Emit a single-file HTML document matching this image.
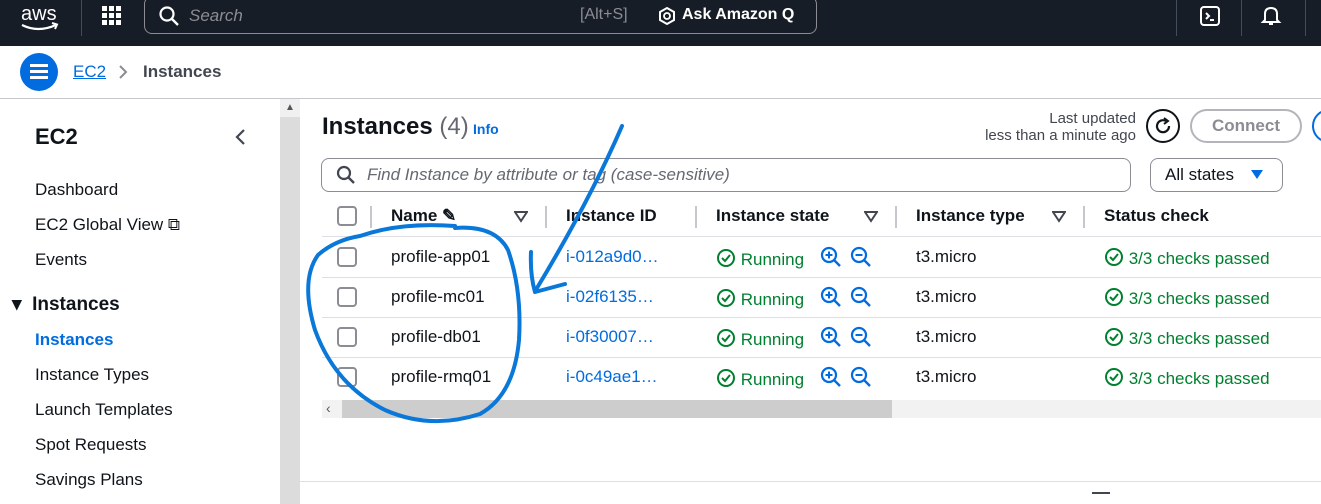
<!DOCTYPE html>
<html><head><meta charset="utf-8"><style>
*{box-sizing:border-box;margin:0;padding:0}
body{width:1321px;height:504px;overflow:hidden;background:#fff;font-family:"Liberation Sans",sans-serif;color:#0f141a;position:relative}
.abs{position:absolute}
.top{left:0;top:0;width:1321px;height:46px;background:#161d26}
.side a,.side div{position:absolute;left:35px;font-size:17px;color:#0f141a;white-space:nowrap}
.hdr{position:absolute;top:206px;font-size:17px;font-weight:bold;color:#0f141a}
.cb{position:absolute;left:337px;width:20px;height:20px;border:2px solid #8c8c94;border-radius:4px;background:#fff}
.row{position:absolute;left:322px;width:1000px;height:1px;background:#dedee3}
.t{position:absolute;font-size:17px;white-space:nowrap}
.g{color:#00802f}
.b{color:#006ce0}
</style></head><body>
<div class="abs top"></div>
<svg class="abs" style="left:18px;top:2px" width="46" height="34" viewBox="0 0 46 34"><text x="3" y="18" fill="#fff" font-size="20" font-family="Liberation Sans">aws</text><path d="M4 23 Q20 31 38 23" stroke="#fff" stroke-width="2.2" fill="none"/><path d="M34 21 L39 22.5 L37 27" stroke="#fff" stroke-width="2" fill="none"/></svg>
<div class="abs" style="left:81px;top:0;width:1px;height:36px;background:#414d5c"></div>
<svg class="abs" style="left:101px;top:5px" width="22" height="22"><g fill="#fff"><rect x="1" y="1" width="5" height="5"/><rect x="8" y="1" width="5" height="5"/><rect x="15" y="1" width="5" height="5"/><rect x="1" y="8" width="5" height="5"/><rect x="8" y="8" width="5" height="5"/><rect x="15" y="8" width="5" height="5"/><rect x="1" y="15" width="5" height="5"/><rect x="8" y="15" width="5" height="5"/><rect x="15" y="15" width="5" height="5"/></g></svg>
<div class="abs" style="left:144px;top:-4px;width:673px;height:38px;border:1.5px solid #8c8c94;border-radius:8px"></div>
<svg class="abs" style="left:158px;top:5px" width="22" height="22"><circle cx="9" cy="9" r="6.5" stroke="#fff" stroke-width="2.2" fill="none"/><path d="M14 14 L20 20" stroke="#fff" stroke-width="2.4"/></svg>
<div class="t" style="left:189px;top:6px;color:#8c8c94;font-style:italic">Search</div>
<div class="t" style="left:580px;top:6px;color:#8c8c94;font-size:16px">[Alt+S]</div>
<svg class="abs" style="left:657px;top:6px" width="20" height="20"><path d="M10 2 L17 6 L17 14 L10 18 L3 14 L3 6 Z" stroke="#fff" stroke-width="2" fill="none"/><circle cx="10" cy="10" r="3" stroke="#fff" stroke-width="1.8" fill="none"/></svg>
<div class="t" style="left:682px;top:6px;color:#fff;font-weight:bold;font-size:16px">Ask Amazon Q</div>
<div class="abs" style="left:1176px;top:0;width:1px;height:36px;background:#414d5c"></div>
<div class="abs" style="left:1241px;top:0;width:1px;height:36px;background:#414d5c"></div>
<div class="abs" style="left:1305px;top:0;width:1px;height:36px;background:#414d5c"></div>
<svg class="abs" style="left:1199px;top:5px" width="22" height="22"><rect x="2" y="2" width="18" height="18" rx="3" stroke="#fff" stroke-width="2" fill="none"/><path d="M7 8 L10 11 L7 14 M11 15 H15" stroke="#fff" stroke-width="2" fill="none"/></svg>
<svg class="abs" style="left:1260px;top:4px" width="22" height="24"><path d="M5 16 V10 Q5 4 11 4 Q17 4 17 10 V16 L19 18 H3 Z" stroke="#fff" stroke-width="2" fill="none"/><path d="M9 20 H13" stroke="#fff" stroke-width="2"/></svg>

<div class="abs" style="left:20px;top:53px;width:38px;height:38px;border-radius:50%;background:#006ce0"></div>
<div class="abs" style="left:30px;top:64px;width:18px;height:2.5px;background:#fff;box-shadow:0 6px 0 #fff,0 12px 0 #fff"></div>
<div class="t b" style="left:73px;top:62px;text-decoration:underline">EC2</div>
<svg class="abs" style="left:117px;top:64px" width="12" height="16"><path d="M3 2 L9 8 L3 14" stroke="#8c8c94" stroke-width="2" fill="none"/></svg>
<div class="t" style="left:143px;top:62px;font-weight:bold;color:#424650">Instances</div>
<div class="abs" style="left:0;top:98px;width:1321px;height:1px;background:#c6c6cd"></div>

<div class="side">
<div style="top:124px;font-size:22px;font-weight:bold">EC2</div>
<div style="top:180px">Dashboard</div>
<div style="top:215px">EC2 Global View ⧉</div>
<div style="top:250px">Events</div>
<div style="top:293px;left:12px;font-size:19px;font-weight:bold">▾&nbsp; Instances</div>
<div style="top:330px;font-weight:bold;color:#006ce0">Instances</div>
<div style="top:365px">Instance Types</div>
<div style="top:400px">Launch Templates</div>
<div style="top:435px">Spot Requests</div>
<div style="top:470px">Savings Plans</div>
</div>
<svg class="abs" style="left:234px;top:127px" width="14" height="20"><path d="M10 3 L3 10 L10 17" stroke="#424650" stroke-width="2.2" fill="none"/></svg>
<div class="abs" style="left:280px;top:99px;width:20px;height:405px;background:#dcdcdc"></div>
<div class="abs" style="left:280px;top:99px;width:20px;height:18px;background:#f0f0f0;text-align:center;font-size:10px;color:#555;line-height:18px">▲</div>

<div class="t" style="left:322px;top:113px;font-size:24px;font-weight:bold">Instances <span style="font-weight:normal;color:#656871">(4)</span></div>
<div class="t b" style="left:473px;top:121px;font-size:14px;font-weight:bold">Info</div>
<div class="t" style="left:980px;top:110px;font-size:15px;color:#424650;text-align:right;width:156px">Last updated<br>less than a minute ago</div>
<div class="abs" style="left:1146px;top:109px;width:34px;height:34px;border:2.5px solid #0f141a;border-radius:50%"></div>
<svg class="abs" style="left:1152px;top:115px" width="22" height="22"><path d="M17 11 A6 6 0 1 1 14 6" stroke="#0f141a" stroke-width="2.2" fill="none"/><path d="M12 3 L16 6 L12 9" stroke="#0f141a" stroke-width="2" fill="none"/></svg>
<div class="abs" style="left:1190px;top:109px;width:112px;height:34px;border:2px solid #b4b4bb;border-radius:17px;color:#8c8c94;font-weight:bold;font-size:17px;text-align:center;line-height:30px">Connect</div>
<div class="abs" style="left:1312px;top:109px;width:34px;height:34px;border:2px solid #006ce0;border-radius:17px"></div>

<div class="abs" style="left:321px;top:158px;width:810px;height:34px;border:1.5px solid #8c8c94;border-radius:8px"></div>
<svg class="abs" style="left:336px;top:165px" width="20" height="20"><circle cx="8" cy="8" r="6" stroke="#424650" stroke-width="2.2" fill="none"/><path d="M12.5 12.5 L18 18" stroke="#424650" stroke-width="2.4"/></svg>
<div class="t" style="left:367px;top:165px;font-style:italic;color:#656871">Find Instance by attribute or tag (case-sensitive)</div>
<div class="abs" style="left:1150px;top:158px;width:133px;height:34px;border:1.5px solid #8c8c94;border-radius:8px"></div>
<div class="t" style="left:1165px;top:165px">All states</div>
<svg class="abs" style="left:1250px;top:169px" width="14" height="12"><path d="M1 1 H13 L7 10 Z" fill="#006ce0"/></svg>

<div class="cb" style="top:206px"></div>
<div class="abs" style="left:370px;top:206px;width:1.5px;height:22px;background:#c6c6cd"></div>
<div class="hdr" style="left:391px">Name ✎</div>
<svg class="abs" style="left:514px;top:211px" width="14" height="12"><path d="M1 1 H13 L7 10 Z" stroke="#424650" stroke-width="2" fill="none"/></svg>
<div class="abs" style="left:545px;top:206px;width:1.5px;height:22px;background:#c6c6cd"></div>
<div class="hdr" style="left:566px">Instance ID</div>
<div class="abs" style="left:695px;top:206px;width:1.5px;height:22px;background:#c6c6cd"></div>
<div class="hdr" style="left:716px">Instance state</div>
<svg class="abs" style="left:864px;top:211px" width="14" height="12"><path d="M1 1 H13 L7 10 Z" stroke="#424650" stroke-width="2" fill="none"/></svg>
<div class="abs" style="left:895px;top:206px;width:1.5px;height:22px;background:#c6c6cd"></div>
<div class="hdr" style="left:916px">Instance type</div>
<svg class="abs" style="left:1052px;top:211px" width="14" height="12"><path d="M1 1 H13 L7 10 Z" stroke="#424650" stroke-width="2" fill="none"/></svg>
<div class="abs" style="left:1083px;top:206px;width:1.5px;height:22px;background:#c6c6cd"></div>
<div class="hdr" style="left:1104px">Status check</div>
<div class="row" style="top:236px"></div>
<div class="row" style="top:277px"></div>
<div class="row" style="top:317px"></div>
<div class="row" style="top:357px"></div>

<div id="rows"></div>
<script>
var names=["profile-app01","profile-mc01","profile-db01","profile-rmq01"],ids=["i-012a9d0…","i-02f6135…","i-0f30007…","i-0c49ae1…"],h="";
var chk='<svg width="20" height="20" style="vertical-align:-3px"><circle cx="10" cy="10" r="8" stroke="#00802f" stroke-width="2" fill="none"/><path d="M6 10 L9 13 L14 7" stroke="#00802f" stroke-width="2" fill="none"/></svg>';
var zi='<svg width="22" height="22"><circle cx="9" cy="9" r="7" stroke="#006ce0" stroke-width="2.2" fill="none"/><path d="M14 14 L20 20" stroke="#006ce0" stroke-width="2.4"/><path d="M5.5 9 H12.5 M9 5.5 V12.5" stroke="#006ce0" stroke-width="2"/></svg>';
var zo='<svg width="22" height="22"><circle cx="9" cy="9" r="7" stroke="#006ce0" stroke-width="2.2" fill="none"/><path d="M14 14 L20 20" stroke="#006ce0" stroke-width="2.4"/><path d="M5.5 9 H12.5" stroke="#006ce0" stroke-width="2"/></svg>';
for(var i=0;i<4;i++){var y=247+i*40;
h+='<div class="cb" style="top:'+y+'px"></div><div class="t" style="left:391px;top:'+y+'px">'+names[i]+'</div>';
h+='<div class="t b" style="left:566px;top:'+y+'px">'+ids[i]+'</div>';
h+='<div class="t g" style="left:716px;top:'+(y+1)+'px">'+chk+' Running</div>';
h+='<div class="abs" style="left:820px;top:'+(y-1)+'px">'+zi+'</div><div class="abs" style="left:850px;top:'+(y-1)+'px">'+zo+'</div>';
h+='<div class="t" style="left:916px;top:'+y+'px">t3.micro</div>';
h+='<div class="t g" style="left:1104px;top:'+y+'px">'+chk+' 3/3 checks passed</div>';}
document.getElementById("rows").innerHTML=h;
</script>
<div class="abs" style="left:322px;top:400px;width:999px;height:18px;background:#f2f2f2"></div>
<div class="abs" style="left:342px;top:400px;width:550px;height:18px;background:#cdcdcd"></div>
<div class="t" style="left:326px;top:400px;font-size:14px;color:#555">‹</div>
<div class="abs" style="left:300px;top:481px;width:1021px;height:1px;background:#dedee3"></div>
<div class="abs" style="left:1092px;top:492px;width:18px;height:2px;background:#424650"></div>

<svg class="abs" style="left:0;top:0" width="1321" height="504"><g stroke="#0a78d8" stroke-width="4" fill="none" stroke-linecap="round" stroke-linejoin="round">
<path d="M455 228 Q495 225 508 250 Q522 290 519 340 Q514 395 480 414 Q430 430 385 410 Q335 385 315 330 Q300 280 318 255 Q335 240 360 236 Q400 222 455 226"/>
<path d="M622 126 Q590 200 537 288"/>
<path d="M531 252 Q530 275 535 292 Q550 288 565 284"/>
</g></svg>
</body></html>
